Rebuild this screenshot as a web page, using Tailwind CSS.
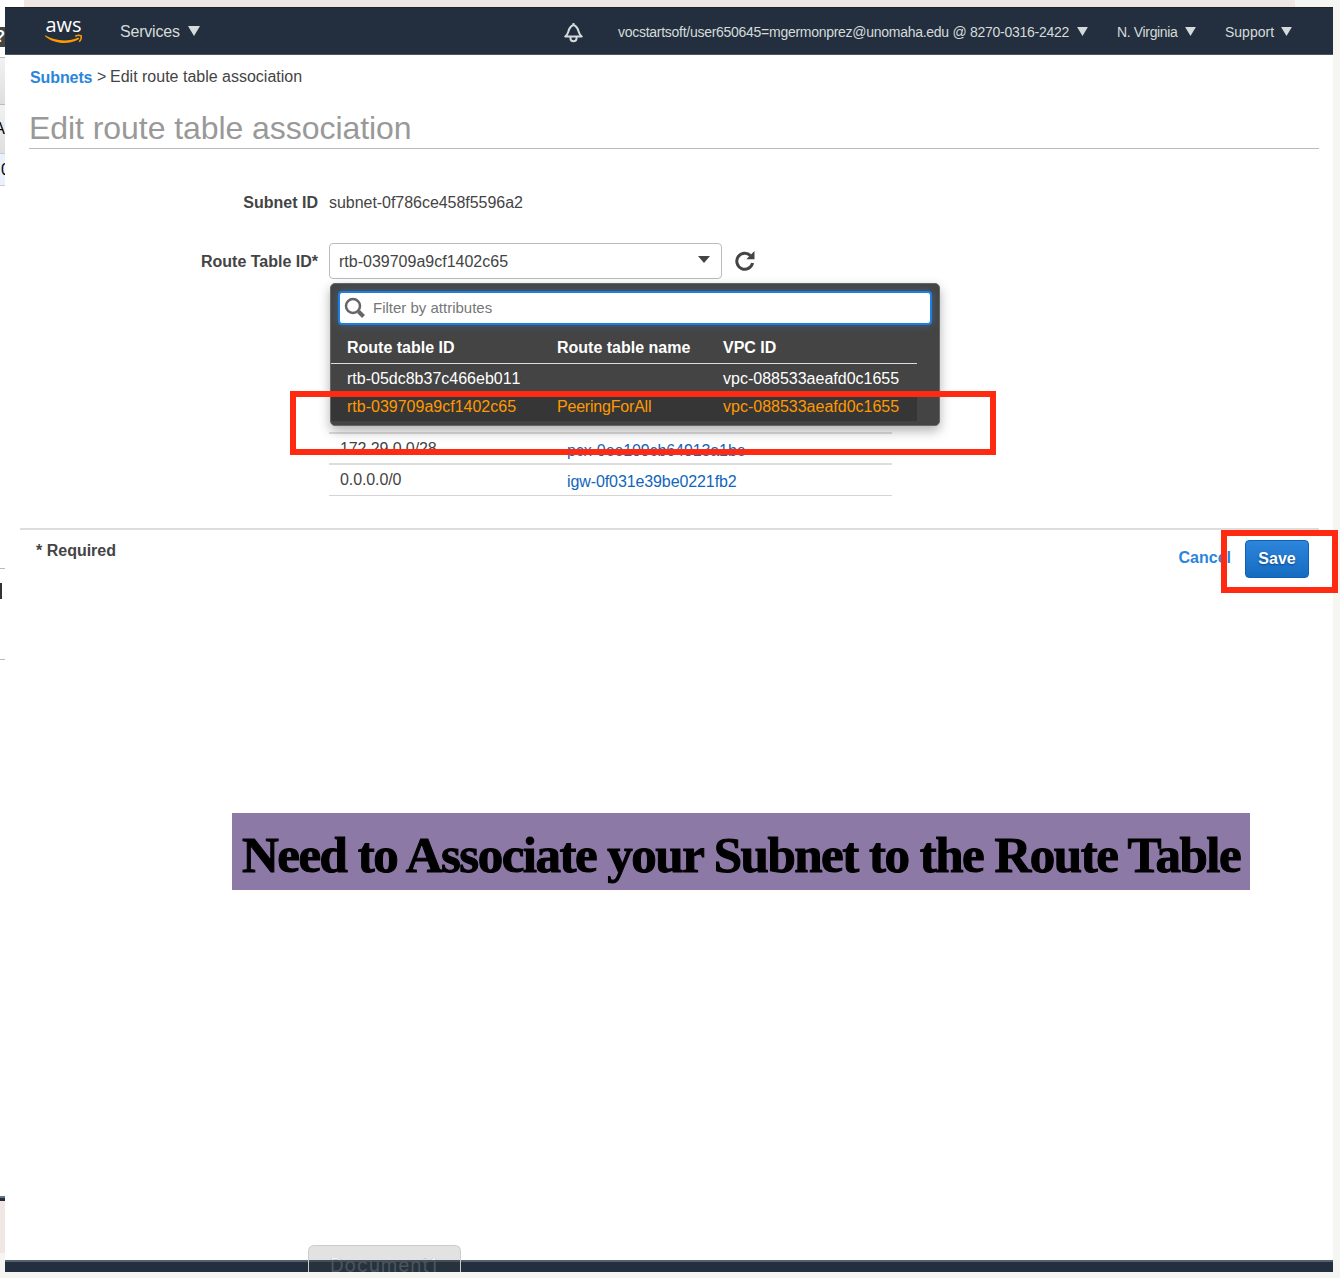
<!DOCTYPE html>
<html lang="en">
<head>
<meta charset="utf-8">
<title>Edit route table association</title>
<script src="https://cdn.jsdelivr.net/npm/@tailwindcss/browser@4"></script>
</head>
<body class="bg-[#f5f6f1]">
<div class="relative flex h-[1278px] w-[1340px] flex-col overflow-hidden bg-[#f5f6f1] font-['Liberation_Sans',Arial,sans-serif] text-base leading-5 text-[#444]">
  <!-- window behind, top edge -->
  <div class="flex h-[7px] shrink-0">
    <div class="w-6 bg-white"></div>
    <div class="w-[1271px] bg-[#f0e6e4]"></div>
  </div>
  <div class="flex h-[1265px] shrink-0">
    <!-- window behind, left edge -->
    <div class="flex w-[5px] shrink-0 flex-col overflow-hidden bg-white text-black">
      <div class="flex h-[50px] items-start justify-end pt-5"><div class="flex h-5 w-5 shrink-0 items-center justify-end bg-[#444] text-base font-bold text-white"><span>?</span></div></div>
      <div class="h-[47px] border-t border-[#bbb] bg-linear-to-b from-[#f2f2f2] to-[#dedede]"></div>
      <div class="flex h-[49px] items-center justify-end border-t border-[#bbb] bg-linear-to-b from-[#f2f2f2] to-[#dedede]"><span>A</span></div>
      <div class="flex h-[33px] items-center border-y border-[#ccc] bg-[#e9f1fe] pl-px"><span>0</span></div>
      <div class="h-[382px]"></div>
      <div class="h-[92px] border-y border-[#bbb] pt-[14px]"><div class="h-4 w-0.5 bg-[#333]"></div></div>
      <div class="h-[536px]"></div>
      <div class="h-[5px] border-t-2 border-[#6b7280] bg-[#232f3e]"></div>
      <div class="h-[52px] bg-[#f0e6e4]"></div>
      <div class="flex-1 bg-[#f5f6f1]"></div>
    </div>

    <main class="flex w-[1328px] shrink-0 flex-col bg-white">
      <header class="flex h-12 shrink-0 items-center border-t border-b border-t-[#222] border-b-[#4b5563] bg-[#232f3e] text-[#d5dbdb]">
        <div class="ml-[39px] flex w-[76px] items-center">
          <svg class="h-[30px] w-10" viewBox="0 0 40 30" fill="none">
            <text x="1.5" y="16.2" font-family="Open Sans, sans-serif" font-size="19.5" font-weight="500" fill="#fff" textLength="36" lengthAdjust="spacingAndGlyphs">aws</text>
            <path d="M1.200 19.300c10 6.200 23.500 6.500 33.300 2.200l.8 1.400C25.500 28.800 10.500 28.500 1 20.200z" fill="#f90"/>
            <path d="M31.300 20.200c2.500-1.200 5-.9 5.900-.4.400 1.700-.6 4.400-2 6" stroke="#f90" stroke-width="1.500"/>
          </svg>
        </div>
        <div class="flex w-[443px] items-center gap-[8px] pt-0.5 -tracking-[0.2px]"><span class="w-[60px] whitespace-nowrap">Services</span><svg class="mb-0.5 h-[10px] w-3" viewBox="0 0 12 10"><path d="M0 0h12L6 10z" fill="#d5dbdb"/></svg></div>
        <svg class="mt-1 mr-[34px] h-5 w-[21px]" viewBox="0 0 21 20" fill="none" stroke="#d5dbdb" stroke-width="2" stroke-linejoin="round"><path d="M2.200 13.500c2-1.200 2.500-2.500 3.200-5C6.300 5 7.300 3 10.500 2c3.200 1 4.200 3 5.100 6.500.7 2.500 1.200 3.800 3.200 5z"/><path d="M10.500 0v2M7.500 14v1.500c0 3.500 6 3.500 6 0V14"/></svg>
        <div class="flex items-center gap-[8px] pt-0.5 text-sm leading-4"><span class="w-[451px] whitespace-nowrap -tracking-[0.275px]">vocstartsoft/user650645=mgermonprez@unomaha.edu @ 8270-0316-2422</span><svg class="mb-0.5 h-[9px] w-[11px]" viewBox="0 0 12 10"><path d="M0 0h12L6 10z" fill="#d5dbdb"/></svg></div>
        <div class="ml-[29px] flex items-center gap-[8px] pt-0.5 text-sm leading-4"><span class="w-[60px] whitespace-nowrap -tracking-[0.35px]">N. Virginia</span><svg class="mb-0.5 h-[9px] w-[11px]" viewBox="0 0 12 10"><path d="M0 0h12L6 10z" fill="#d5dbdb"/></svg></div>
        <div class="ml-[29px] flex items-center gap-[7px] pt-0.5 text-sm leading-4"><span class="w-[49px] whitespace-nowrap">Support</span><svg class="mb-0.5 h-[9px] w-[11px]" viewBox="0 0 12 10"><path d="M0 0h12L6 10z" fill="#d5dbdb"/></svg></div>
      </header>

      <nav class="mt-3 flex h-5 shrink-0 items-center pl-[25px]"><a class="w-[62px] pt-0.5 font-bold -tracking-[0.1px] text-[#2b85dc]">Subnets</a><span class="w-[18px] pl-[5px]">&gt;</span><span>Edit route table association</span></nav>
      <h1 class="mr-[14px] ml-6 mt-[22px] h-10 shrink-0 border-b border-[#bbb] text-[32px] leading-[38px] -tracking-[0.06px] text-[#999]">Edit route table association</h1>

      <div class="mt-11 flex h-5 shrink-0"><div class="w-[313px] text-right font-bold">Subnet ID</div><div class="ml-[11px] -tracking-[0.04px]">subnet-0f786ce458f5596a2</div></div>
      <div class="mt-[30px] flex h-9 shrink-0 items-center">
        <div class="w-[313px] pt-0.5 text-right font-bold">Route Table ID*</div>
        <div class="ml-[11px] flex h-9 w-[393px] items-center justify-between rounded-[4px] border border-[#bbb] pr-[11px] pl-[9px]"><span class="pt-0.5">rtb-039709a9cf1402c65</span><svg class="mb-1 h-[7px] w-3" viewBox="0 0 12 7"><path d="M0 0h12L6 7z" fill="#444"/></svg></div>
        <svg class="ml-3 size-[22px]" viewBox="0 0 22 22" fill="none"><path d="M16.500 5.600A8 8 0 1 0 18.600 13" stroke="#444" stroke-width="3"/><path d="M20.500 1v8.200h-8.200z" fill="#444"/></svg>
      </div>

      <div class="relative ml-[324px] mt-[24px] flex h-[193px] w-[563px] shrink-0 flex-col justify-end">
        <div class="flex h-[31px] items-center border-t-2 border-[#ddd] pl-[11px] -tracking-[0.1px]"><span class="w-[227px]">172.29.0.0/28</span><a class="mt-1 text-[#1166bb]">pcx-0ee109cb64913a1be</a></div>
        <div class="flex h-8 items-center border-t-2 border-[#ddd] pl-[11px] -tracking-[0.1px]"><span class="w-[227px]">0.0.0.0/0</span><a class="mt-1 text-[#1166bb]">igw-0f031e39be0221fb2</a></div>
        <div class="h-px bg-[#d5d5d5]"></div>

        <!-- open dropdown -->
        <div class="absolute left-px -top-[20px] flex h-[143px] w-[610px] flex-col rounded-[5px] border border-[#666] bg-[#444] text-white shadow-[0_5px_12px_rgba(0,0,0,0.3)] [font-kerning:none]">
          <div class="mx-[7px] mt-[7px] flex h-[34px] items-center rounded-[4px] border-2 border-[#1b7fe6] bg-white pl-1 text-[15px] text-[#777] shadow-[0_0_8px_#46617c]"><svg class="mr-[7px] size-[22px]" viewBox="0 0 22 22" fill="none" stroke="#666"><circle cx="9" cy="9" r="7" stroke-width="2.500"/><path d="M14.500 14.500l5 5" stroke-width="4"/></svg><span>Filter by attributes</span></div>
          <div class="mr-[22px] mt-2 flex h-[31px] items-center border-b border-[#ddd] pl-4 font-bold"><span class="w-[210px]">Route table ID</span><span class="w-[166px]">Route table name</span><span>VPC ID</span></div>
          <div class="mr-[22px] flex h-[29px] items-center pl-4"><span class="w-[210px]">rtb-05dc8b37c466eb011</span><span class="w-[166px]"></span><span>vpc-088533aeafd0c1655</span></div>
          <div class="mr-[22px] flex h-[28px] items-center bg-[#363636] pl-4 text-[#f90]"><span class="w-[210px]">rtb-039709a9cf1402c65</span><span class="w-[166px] -tracking-[0.2px]">PeeringForAll</span><span>vpc-088533aeafd0c1655</span></div>
        </div>
      </div>

      <div class="mr-[14px] ml-[15px] mt-8 flex shrink-0 justify-between border-t-2 border-[#ddd]">
        <div class="pt-[11px] pl-4 font-bold">* Required</div>
        <div class="mt-2.5 mr-2.5 flex items-center font-bold"><a class="mr-[14px] pb-0.5 text-[#2b85dc]">Cancel</a><button class="flex h-[38px] w-[64px] items-center justify-center rounded-[4px] border border-[#1060b8] bg-linear-to-b from-[#2d85dc] to-[#146cc0] font-bold text-white [text-shadow:0_1px_2px_#0a4488]">Save</button></div>
      </div>
      <div class="flex-1"></div>
      <footer class="h-3 shrink-0 border-t-2 border-[#56606c] bg-[#232f3e]"></footer>
    </main>
  </div>

  <!-- window label -->
  <div class="absolute left-[308px] top-[1245px] h-[27px] w-[153px] overflow-hidden rounded-t-[6px] border border-b-0 border-[#ccc] bg-[#e2e2e2]">
    <div class="absolute -inset-x-px top-[14px] h-3 border-t-2 border-[#454d56] bg-[#27333c]"></div>
    <div class="absolute left-[21px] top-[10px] whitespace-nowrap font-[Inter,sans-serif] text-[19px] leading-5 tracking-[0.9px] text-[#4b5560]">Document1</div>
    <div class="absolute left-[21px] top-[10px] h-[4px] overflow-hidden whitespace-nowrap font-[Inter,sans-serif] text-[19px] leading-5 tracking-[0.9px] text-[#f5f5f5]" aria-hidden="true">Document1</div>
  </div>

  <!-- annotations -->
  <div class="absolute left-[290px] top-[391px] h-16 w-[706px] border-[6px] border-[#ff2a12]"></div>
  <div class="absolute left-[1221px] top-[530px] h-[63px] w-[117px] border-[6px] border-[#ff2a12]"></div>
  <div class="absolute left-[232px] top-[813px] flex h-[77px] w-[1018px] items-center bg-[#8d79a6] pt-1.5 pl-[10px] font-['Liberation_Serif',serif] text-[51px] leading-[60px] font-bold whitespace-nowrap text-black -tracking-[1.5px] [-webkit-text-stroke:1px_black]">Need to Associate your Subnet to the Route Table</div>
</div>
</body>
</html>
